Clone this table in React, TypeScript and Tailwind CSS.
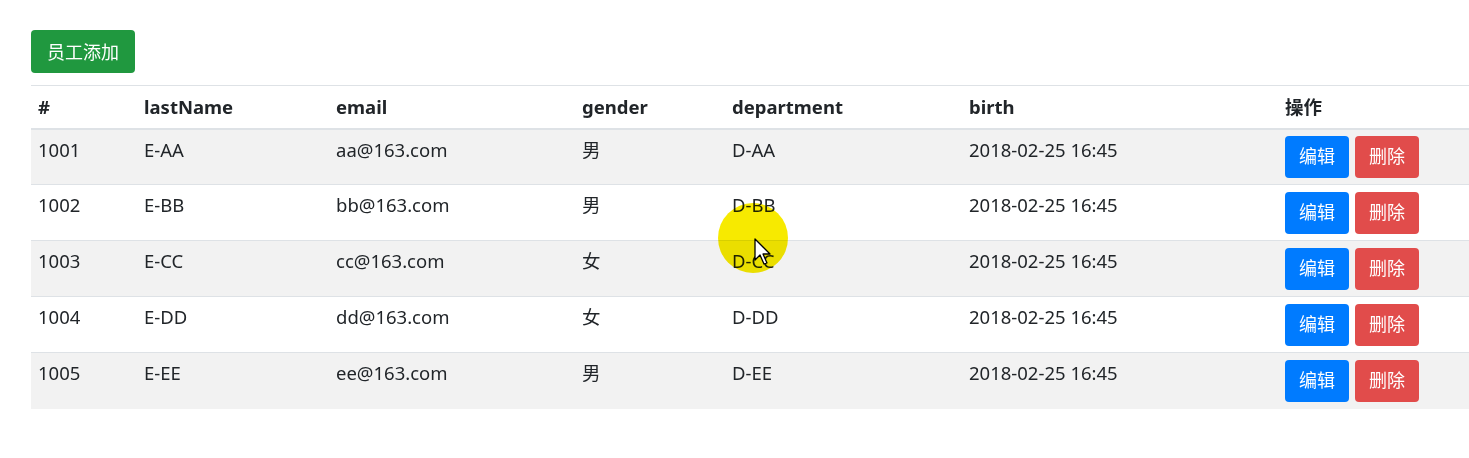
import React from "react";

const employees = [
  { id: 1001, lastName: "E-AA", email: "aa@163.com", gender: "男", dept: "D-AA" },
  { id: 1002, lastName: "E-BB", email: "bb@163.com", gender: "男", dept: "D-BB" },
  { id: 1003, lastName: "E-CC", email: "cc@163.com", gender: "女", dept: "D-CC" },
  { id: 1004, lastName: "E-DD", email: "dd@163.com", gender: "女", dept: "D-DD" },
  { id: 1005, lastName: "E-EE", email: "ee@163.com", gender: "男", dept: "D-EE" },
];

const cols = ["w-[106px]", "w-[192px]", "w-[246px]", "w-[150px]", "w-[237px]", "w-[316px]", "w-[192px]"];

const App = () => {
  return (
    <div
      className="relative w-[1469px] h-[458px] bg-white text-[#212529] overflow-hidden"
      style={{ fontFamily: '"Noto Sans", "Noto Sans CJK SC", sans-serif' }}
    >
      <div className="pt-[30px] pl-[31px]">
        <button className="h-[43px] w-[104px] rounded-[4px] bg-[#20983f] text-white text-[18px] leading-none">
          员工添加
        </button>

        <table className="mt-[12px] w-[1438px] table-fixed border-collapse text-[18.5px] leading-[27px]">
          <colgroup>
            {cols.map((c, i) => (
              <col key={i} className={c} />
            ))}
          </colgroup>
          <thead>
            <tr className="border-t border-[#dee2e6] border-b-2 h-[43px]">
              {["#", "lastName", "email", "gender", "department", "birth", "操作"].map((h) => (
                <th key={h} className="text-left font-bold px-[7px] align-middle">
                  {h}
                </th>
              ))}
            </tr>
          </thead>
          <tbody>
            {employees.map((e, i) => (
              <tr
                key={e.id}
                className={`h-[56px] border-t border-[#dee2e6] ${i % 2 === 0 ? "bg-[#f2f2f2]" : "bg-white"}`}
              >
                <td className="px-[7px] pt-[6px] align-top">{e.id}</td>
                <td className="px-[7px] pt-[6px] align-top">{e.lastName}</td>
                <td className="px-[7px] pt-[6px] align-top">{e.email}</td>
                <td className="px-[7px] pt-[6px] align-top">{e.gender}</td>
                <td className="px-[7px] pt-[6px] align-top">{e.dept}</td>
                <td className="px-[7px] pt-[6px] align-top">2018-02-25 16:45</td>
                <td className="px-[7px] align-middle">
                  <div className="flex gap-[6px]">
                    <button className="h-[42px] w-[64px] rounded-[4px] bg-[#007bff] text-white text-[18px]">编辑</button>
                    <button className="h-[42px] w-[64px] rounded-[4px] bg-[#e14c4b] text-white text-[18px]">删除</button>
                  </div>
                </td>
              </tr>
            ))}
          </tbody>
        </table>
      </div>

      {/* screen recorder cursor highlight */}
      <div className="absolute left-[718px] top-[203px] w-[70px] h-[70px] rounded-full bg-[#f7ea00] mix-blend-multiply" />
      <svg className="absolute left-[754px] top-[238px]" width="18" height="28" viewBox="0 0 18 28">
        <path d="M1 1 L1 22 L6 17 L10 26 L13 25 L9 16 L16 16 Z" fill="#fff" stroke="#000" strokeWidth="1.3" strokeLinejoin="round" />
      </svg>
    </div>
  );
};

export default App;
